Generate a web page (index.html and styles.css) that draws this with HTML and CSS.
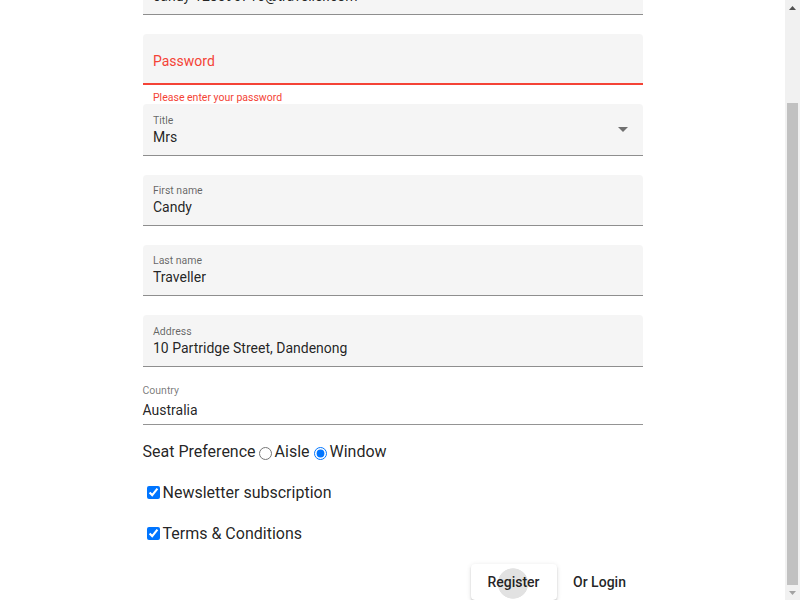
FILE: index.html
```html
<!DOCTYPE html>
<html lang="en">
<head>
<meta charset="utf-8">
<title>Register</title>
<link rel="stylesheet" href="styles.css">
</head>
<body>
<div class="scroller" id="scroller">
  <form class="form">
    <h2 class="title">Register</h2>

    <div class="ff">
      <div class="fill">
        <span class="lbl">Email</span>
        <span class="val">candy-128390716@traveller.com</span>
      </div>
      <div class="sub"></div>
    </div>

    <div class="ff">
      <div class="fill invalid">
        <span class="ph">Password</span>
      </div>
      <div class="sub err">Please enter your password</div>
    </div>

    <div class="ff">
      <div class="fill select">
        <div class="col">
          <span class="lbl">Title</span>
          <span class="val">Mrs</span>
        </div>
        <span class="arrow"></span>
      </div>
      <div class="sub"></div>
    </div>

    <div class="ff">
      <div class="fill">
        <span class="lbl">First name</span>
        <span class="val">Candy</span>
      </div>
      <div class="sub"></div>
    </div>

    <div class="ff">
      <div class="fill">
        <span class="lbl">Last name</span>
        <span class="val">Traveller</span>
      </div>
      <div class="sub"></div>
    </div>

    <div class="ff">
      <div class="fill">
        <span class="lbl">Address</span>
        <span class="val">10 Partridge Street, Dandenong</span>
      </div>
      <div class="sub last"></div>
    </div>

    <div class="ff">
      <div class="legacy">
        <span class="lbl">Country</span>
        <span class="val">Australia</span>
      </div>
      <div class="legacy-sub"></div>
    </div>

    <div class="row seat">
      <span>Seat Preference</span><input class="first" type="radio" name="seat" value="aisle"><span>Aisle</span><input class="second" type="radio" name="seat" value="window" checked><span>Window</span>
    </div>

    <label class="row check"><input type="checkbox" checked><span>Newsletter subscription</span></label>
    <label class="row check"><input type="checkbox" checked><span>Terms &amp; Conditions</span></label>

    <div class="actions">
      <button type="button" class="btn raised">Register</button>
      <button type="button" class="btn">Or Login</button>
    </div>
  </form>
</div>
<div class="vbar" aria-hidden="true">
  <div class="vbtn">
    <svg width="7" height="4" viewBox="0 0 7 4"><path d="M3.5 0L7 4H0z" fill="#505050"/></svg>
  </div>
  <div class="vtrack" id="vtrack">
    <div class="vthumb" id="vthumb"></div>
  </div>
  <div class="vbtn">
    <svg width="7" height="4" viewBox="0 0 7 4"><path d="M0 0H7L3.5 4z" fill="#a3a3a3"/></svg>
  </div>
</div>
<script src="script.js"></script>
</body>
</html>
```

FILE: styles.css
```css
html, body {
  margin: 0;
  padding: 0;
  background: #fff;
  height: 100%;
  overflow: hidden;
}

body {
  display: flex;
  font-family: Roboto, "Liberation Sans", Arial, sans-serif;
  color: rgba(0, 0, 0, 0.87);
}

.scroller {
  flex: 1;
  height: 100vh;
  overflow-y: scroll;
  scrollbar-width: none;
}

.scroller::-webkit-scrollbar {
  display: none;
}

.vbar {
  width: 15px;
  height: 100vh;
  flex: none;
  display: flex;
  flex-direction: column;
  background: #f1f1f1;
}

.vbtn {
  height: 15px;
  flex: none;
  display: flex;
  align-items: center;
  justify-content: center;
}

.vbtn svg {
  display: block;
}

.vtrack {
  flex: 1;
  padding: 0 2px;
  display: flex;
  flex-direction: column;
}

.vthumb {
  margin-top: 88px;
  height: 482px;
  background: #c1c1c1;
}

.form {
  width: 500px;
  margin: 0 auto;
  display: flex;
  flex-direction: column;
}

.title {
  margin: 20px 0 21.7px;
  font-size: 24px;
  line-height: 32px;
  font-weight: 400;
}

.fill {
  box-sizing: border-box;
  height: 51.5px;
  padding: 10.5px 10.5px 0;
  background: #f5f5f5;
  border-radius: 4px 4px 0 0;
  border-bottom: 1px solid rgba(0, 0, 0, 0.42);
  display: flex;
  flex-direction: column;
}

.fill.invalid {
  border-bottom: 2px solid #f44336;
}

.fill.select {
  flex-direction: row;
}

.col {
  flex: 1;
  display: flex;
  flex-direction: column;
}

.lbl {
  font-size: 10.5px;
  line-height: 11.5px;
  color: rgba(0, 0, 0, 0.6);
}

.val {
  margin-top: 3.5px;
  font-size: 14px;
  line-height: 15.75px;
  color: rgba(0, 0, 0, 0.87);
  white-space: nowrap;
}

.ph {
  margin-top: 10px;
  font-size: 14px;
  line-height: 15.75px;
  color: #f44336;
}

.arrow {
  width: 0;
  height: 0;
  margin: 12.5px 4.5px 0 0;
  border-left: 5px solid transparent;
  border-right: 5px solid transparent;
  border-top: 5px solid rgba(0, 0, 0, 0.54);
}

.sub {
  box-sizing: border-box;
  height: 18.8px;
  padding: 6.5px 10.5px 0;
  font-size: 10.5px;
  line-height: 11.8px;
}

.sub.last {
  height: 19.8px;
}

.sub.err {
  color: #f44336;
}

.legacy {
  display: flex;
  flex-direction: column;
  padding-bottom: 5px;
  border-bottom: 1px solid rgba(0, 0, 0, 0.42);
}

.legacy .lbl {
  line-height: 10px;
  color: rgba(0, 0, 0, 0.54);
}

.legacy .val {
  margin-top: 6.7px;
}

.legacy-sub {
  height: 17.5px;
}

.row {
  display: flex;
  align-items: center;
  height: 19px;
  font-size: 16px;
  color: rgba(0, 0, 0, 0.87);
  white-space: nowrap;
}

.seat input {
  margin: 3px 3px 0 5px;
}

.seat input.first {
  margin-left: 3px;
}

.seat input.second {
  margin-left: 4px;
}

.row.check {
  margin-top: 22px;
}

.actions {
  display: flex;
  justify-content: flex-end;
  margin: 20.5px 0 0;
}

.btn {
  height: 36px;
  min-width: 86px;
  padding: 0 16px;
  border: 0;
  border-radius: 4px;
  background: transparent;
  font-family: Roboto, "Liberation Sans", Arial, sans-serif;
  font-size: 14px;
  font-weight: 500;
  line-height: 36px;
  color: rgba(0, 0, 0, 0.87);
  cursor: pointer;
}

.btn.raised {
  background: radial-gradient(circle 15.5px at 42px 19.5px, #e2e2e2 96%, rgba(226, 226, 226, 0) 100%), #fff;
  box-shadow: 0 3px 1px -2px rgba(0, 0, 0, 0.2), 0 2px 2px 0 rgba(0, 0, 0, 0.14), 0 1px 5px 0 rgba(0, 0, 0, 0.12);
}
```

FILE: script.js
```js
function updateBar() {
  var s = document.getElementById('scroller');
  var track = document.getElementById('vtrack');
  var thumb = document.getElementById('vthumb');
  var sh = s.scrollHeight, ch = s.clientHeight, st = s.scrollTop;
  var tl = track.clientHeight;
  if (sh <= ch) {
    thumb.style.display = 'none';
    return;
  }
  var h = Math.max(Math.round(tl * ch / sh), 17);
  var top = Math.round((tl - h) * st / (sh - ch));
  thumb.style.height = h + 'px';
  thumb.style.marginTop = top + 'px';
}
function scrollToEnd() {
  var s = document.getElementById('scroller');
  s.scrollTop = s.scrollHeight;
  updateBar();
}
document.getElementById('scroller').addEventListener('scroll', updateBar);
scrollToEnd();
window.addEventListener('load', scrollToEnd);
```
